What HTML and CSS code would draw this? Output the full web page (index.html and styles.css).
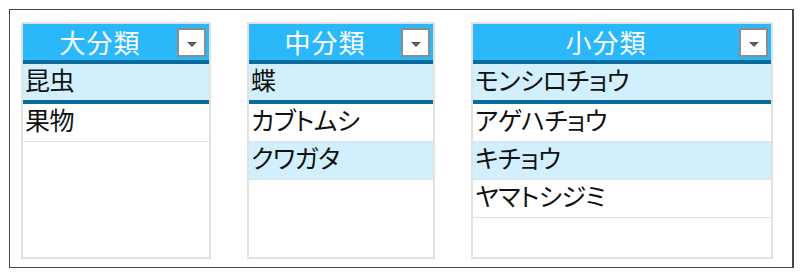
FILE: index.html
```html
<!DOCTYPE html>
<html lang="ja">
<head>
<meta charset="utf-8">
<link rel="stylesheet" href="styles.css">
</head>
<body>
<div class="frame">
  <div class="list w1">
    <div class="head"><span class="title">大分類</span><span class="btn"><span class="tri"></span></span></div>
    <div class="row sel">昆虫</div>
    <div class="row">果物</div>
  </div>
  <div class="list w2">
    <div class="head"><span class="title">中分類</span><span class="btn"><span class="tri"></span></span></div>
    <div class="row sel">蝶</div>
    <div class="row">カブトムシ</div>
    <div class="row alt">クワガタ</div>
  </div>
  <div class="list w3">
    <div class="head"><span class="title">小分類</span><span class="btn"><span class="tri"></span></span></div>
    <div class="row sel">モンシロチョウ</div>
    <div class="row">アゲハチョウ</div>
    <div class="row alt">キチョウ</div>
    <div class="row">ヤマトシジミ</div>
  </div>
</div>
</body>
</html>
```

FILE: styles.css
```css
html, body {
  margin: 0;
  padding: 0;
  background: #ffffff;
}
body {
  font-family: "Noto Sans CJK JP", "Noto Sans", sans-serif;
  font-feature-settings: "palt";
}
.frame {
  margin: 9px 0 0 9px;
  width: 785px;
  height: 259px;
  box-sizing: border-box;
  border: 1px solid #474747;
  border-right-width: 2px;
  display: flex;
  align-items: flex-start;
  gap: 36px;
  padding: 12px 0 0 11px;
}
.list {
  box-sizing: border-box;
  height: 237px;
  border: 2px solid #e1e1e1;
  display: flex;
  flex-direction: column;
}
.w1 { width: 190px; }
.w2 { width: 188px; }
.w3 { width: 302px; }
.head {
  height: 36px;
  box-sizing: border-box;
  background: #2ab8fb;
  display: flex;
  align-items: center;
  padding: 0 3px 0 0;
}
.title {
  flex: 1;
  text-align: center;
  color: #ffffff;
  font-size: 26px;
  line-height: 36px;
  letter-spacing: 1px;
}
.btn {
  width: 29px;
  height: 29px;
  box-sizing: border-box;
  border: 2px solid #8c8c8c;
  background: #ffffff;
  display: flex;
  align-items: center;
  justify-content: center;
  margin-top: 1px;
}
.tri {
  width: 0;
  height: 0;
  border-left: 5px solid transparent;
  border-right: 5px solid transparent;
  border-top: 5px solid #5a5a5a;
  margin-top: 3px;
}
.row {
  height: 38px;
  box-sizing: border-box;
  border-bottom: 1px solid #e1e1e1;
  padding-left: 2px;
  font-size: 25px;
  line-height: 30px;
  letter-spacing: -0.5px;
  color: #111111;
  white-space: nowrap;
}
.row.alt {
  background: #d1effc;
}
.row.sel {
  height: 44px;
  background: #d1effc;
  border-top: 4px solid #0b6c9c;
  border-bottom: 4px solid #0b6c9c;
}
```
